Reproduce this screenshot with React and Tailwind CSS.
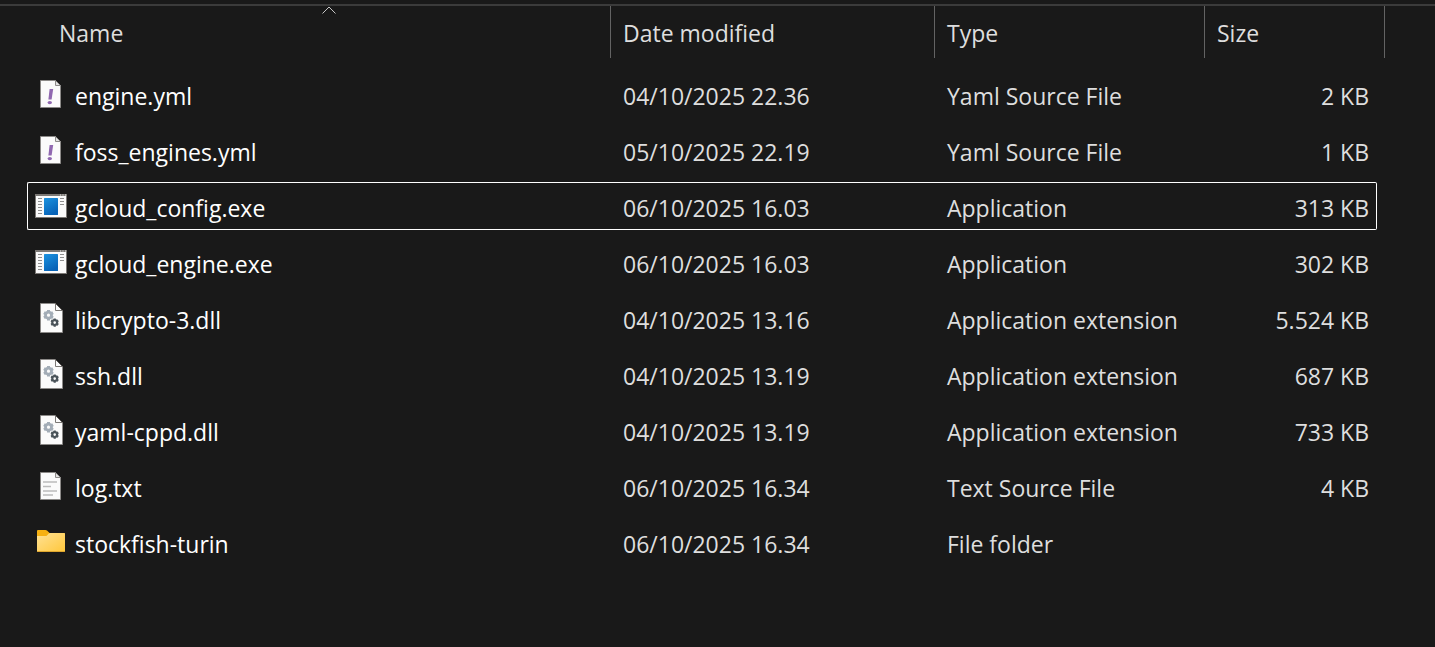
import React from 'react';

function PageShape() {
  return (
    <>
      <path d="M5.5 2.5H20.5L25.5 7.5V29.5H5.5Z" fill="#fbfbfb" stroke="#8c8a88" />
      <path d="M20.5 2.5V7.5H25.5Z" fill="#e2e2e2" stroke="#8c8a88" />
    </>
  );
}

function YamlIcon() {
  return (
    <svg className="size-8 shrink-0" viewBox="0 0 32 32" aria-hidden="true">
      <PageShape />
      <path d="M14.6 11H18.2L16.6 21.4H13.4Z" fill="#9068b0" />
      <ellipse cx="14.8" cy="24.6" rx="2.2" ry="1.7" fill="#9068b0" />
    </svg>
  );
}

function TextIcon() {
  return (
    <svg className="size-8 shrink-0" viewBox="0 0 32 32" aria-hidden="true">
      <PageShape />
      <path d="M8 12H22M8 16.5H16M8 21H22M8 25H18" stroke="#bcbcbc" strokeWidth="1.7" fill="none" />
    </svg>
  );
}

function AppIcon() {
  return (
    <svg className="size-8 shrink-0" viewBox="0 0 32 32" aria-hidden="true">
      <defs>
        <linearGradient id="window-blue" x1="0" y1="0" x2="0.5" y2="1">
          <stop offset="0" stopColor="#1c93e0" />
          <stop offset="1" stopColor="#0763b8" />
        </linearGradient>
      </defs>
      <rect x="0.5" y="4.5" width="31" height="23" fill="#fafafa" stroke="#7b7875" />
      <rect x="0" y="4" width="32" height="2" fill="#7b7875" />
      <path d="M25 5h1M27.5 5h1M30 5h1" stroke="#e8e8e8" />
      <rect x="9" y="8" width="14" height="17" rx="0.5" fill="url(#window-blue)" />
      <path
        d="M3 8.5h4M3 11.5h4M3 14.5h4M3 17.5h4M3 20.5h4M3 23.5h4M25 8.5h4M25 11.5h4M25 14.5h4"
        stroke="#8f8f8f"
      />
    </svg>
  );
}

function LibraryIcon() {
  return (
    <svg className="size-8 shrink-0" viewBox="0 0 32 32" aria-hidden="true">
      <path d="M5.5 1.5H20.5L27.5 8.5V30.5H5.5Z" fill="#fbfbfb" stroke="#8c8a88" />
      <path d="M21 1L28 8V1Z" fill="#191919" />
      <path d="M20.5 1.5V8.5H27.5" fill="none" stroke="#7b7875" />
      <path d="M20.5 1.5L27.5 8.5" stroke="#55524f" />
      <circle cx="13.5" cy="13.2" r="3" fill="none" stroke="#a3adb7" strokeWidth="2.8" />
      <path
        d="M13.5 8V10M13.5 16.4V18.4M9 10.6L10.7 11.6M16.3 14.8L18 15.8M9 15.8L10.7 14.8M16.3 11.6L18 10.6"
        stroke="#a3adb7"
        strokeWidth="3"
      />
      <circle cx="19.7" cy="20.6" r="2.4" fill="none" stroke="#4a5359" strokeWidth="2.2" />
      <path
        d="M19.7 16.4V18M19.7 23.2V24.8M16.1 18.5L17.5 19.3M21.9 21.9L23.3 22.7M16.1 22.7L17.5 21.9M21.9 19.3L23.3 18.5"
        stroke="#4a5359"
        strokeWidth="2.2"
      />
    </svg>
  );
}

function FolderIcon() {
  return (
    <svg className="size-8 shrink-0" viewBox="0 0 32 32" aria-hidden="true">
      <defs>
        <linearGradient id="folder-front" x1="0" y1="0" x2="1" y2="1">
          <stop offset="0" stopColor="#ffe194" />
          <stop offset="1" stopColor="#ffc73b" />
        </linearGradient>
      </defs>
      <path d="M2 5Q2 4 3 4H10.5Q11.3 4 12 4.6L14.6 7H29Q30 7 30 8V14H2Z" fill="#f6b011" />
      <path
        d="M2 10H10.6Q11.4 10 12 9.4L13.8 7.6Q14.4 7 15.2 7H29Q30 7 30 8V25Q30 26 29 26H3Q2 26 2 25Z"
        fill="url(#folder-front)"
      />
      <path d="M2.3 25.5H29.7" stroke="#e0a72e" />
    </svg>
  );
}

const files = [
  { name: 'engine.yml', date: '04/10/2025 22.36', type: 'Yaml Source File', size: '2 KB', Icon: YamlIcon },
  { name: 'foss_engines.yml', date: '05/10/2025 22.19', type: 'Yaml Source File', size: '1 KB', Icon: YamlIcon },
  { name: 'gcloud_config.exe', date: '06/10/2025 16.03', type: 'Application', size: '313 KB', Icon: AppIcon, focused: true },
  { name: 'gcloud_engine.exe', date: '06/10/2025 16.03', type: 'Application', size: '302 KB', Icon: AppIcon },
  { name: 'libcrypto-3.dll', date: '04/10/2025 13.16', type: 'Application extension', size: '5.524 KB', Icon: LibraryIcon },
  { name: 'ssh.dll', date: '04/10/2025 13.19', type: 'Application extension', size: '687 KB', Icon: LibraryIcon },
  { name: 'yaml-cppd.dll', date: '04/10/2025 13.19', type: 'Application extension', size: '733 KB', Icon: LibraryIcon },
  { name: 'log.txt', date: '06/10/2025 16.34', type: 'Text Source File', size: '4 KB', Icon: TextIcon },
  { name: 'stockfish-turin', date: '06/10/2025 16.34', type: 'File folder', size: '', Icon: FolderIcon },
];

function HeaderCell({ label, sorted, first, span }) {
  return (
    <th
      scope="col"
      colSpan={span}
      aria-sort={sorted ? 'ascending' : undefined}
      className={first ? 'p-0 pb-2 pl-5 font-normal' : 'p-0 pb-2 font-normal'}
    >
      <button
        type="button"
        className="relative flex h-[52px] w-full items-center border-r border-[#636363] pt-0.5 pl-3 text-left"
      >
        {label}
        {sorted && (
          <svg className="absolute inset-x-0 top-0 mx-auto h-2 w-4" viewBox="0 0 16 8" aria-hidden="true">
            <path d="M1.5 7.5L8 1L14.5 7.5" fill="none" stroke="#c8c8c8" />
          </svg>
        )}
      </button>
    </th>
  );
}

function FileRow({ file }) {
  const { Icon } = file;
  const edge = file.focused ? 'border-white' : 'border-transparent';
  return (
    <tr>
      <td className="px-0 py-1">
        <div className={`flex h-12 items-center gap-2 rounded-l-xs border-y border-l pl-[7px] text-white ${edge}`}>
          <Icon />
          <span className="pt-1">{file.name}</span>
        </div>
      </td>
      <td className="px-0 py-1">
        <div className={`flex h-12 items-center border-y pt-1 pl-3 ${edge}`}>{file.date}</div>
      </td>
      <td className="px-0 py-1">
        <div className={`flex h-12 items-center border-y pt-1 pl-3 ${edge}`}>{file.type}</div>
      </td>
      <td className="px-0 py-1">
        <div className={`flex h-12 items-center justify-end rounded-r-xs border-y border-r pt-1 pr-[7px] ${edge}`}>
          {file.size}
        </div>
      </td>
      <td className="p-0" />
    </tr>
  );
}

export default function App() {
  return (
    <main className="min-h-screen bg-[#191919] pt-1 font-['Open_Sans','Noto_Sans',sans-serif] text-[23px] leading-8 text-[#dedede]">
      <div className="border-t-2 border-[#3b3b3b] pr-[50px] pl-[27px]">
        <table className="w-full table-fixed border-separate border-spacing-0 whitespace-nowrap">
          <colgroup>
            <col />
            <col className="w-[324px]" />
            <col className="w-[270px]" />
            <col className="w-[172px]" />
            <col className="w-2" />
          </colgroup>
          <thead>
            <tr>
              <HeaderCell label="Name" sorted first />
              <HeaderCell label="Date modified" />
              <HeaderCell label="Type" />
              <HeaderCell label="Size" span={2} />
            </tr>
          </thead>
          <tbody>
            {files.map((file) => (
              <FileRow key={file.name} file={file} />
            ))}
          </tbody>
        </table>
      </div>
    </main>
  );
}
